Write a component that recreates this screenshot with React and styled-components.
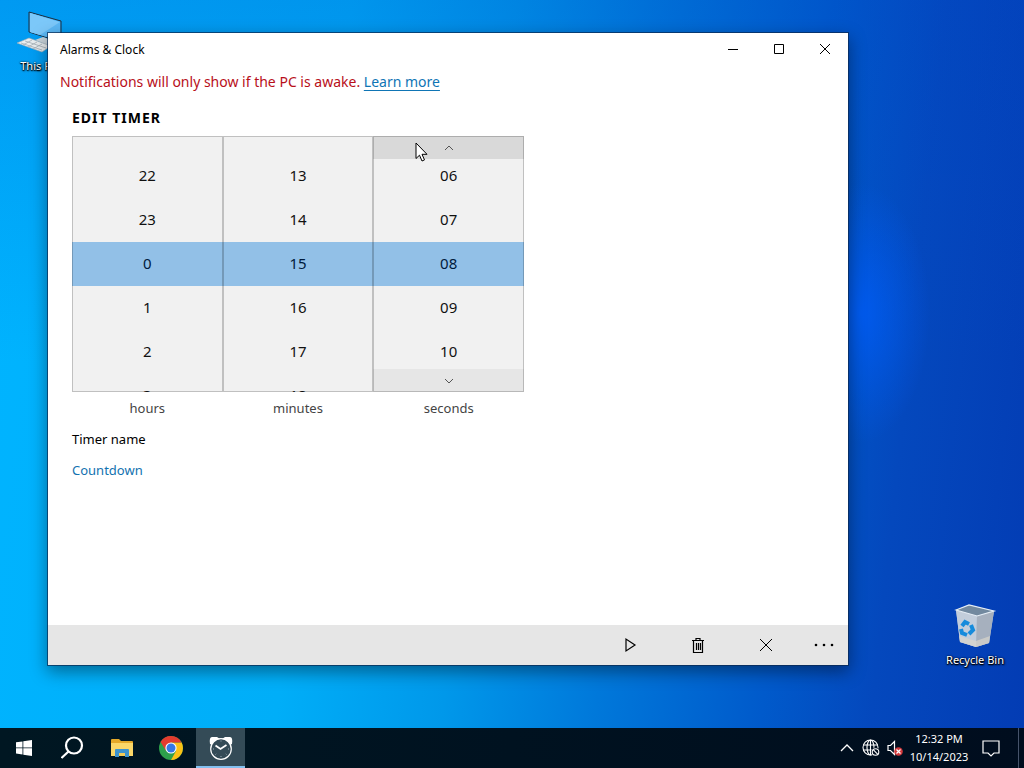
import { useState } from "react";
import styled, { createGlobalStyle } from "styled-components";

const GlobalStyles = createGlobalStyle`
  * {
    box-sizing: border-box;
  }

  body {
    margin: 0;
    font-family: "Noto Sans", "Open Sans", sans-serif;
    color: #000;
  }

  button, input {
    font-family: inherit;
    color: inherit;
  }
`;

const Screen = styled.div`
  display: flex;
  flex-direction: column;
  height: 100vh;
  overflow: hidden;
`;

const Desktop = styled.main`
  position: relative;
  flex: 1;
  min-height: 0;
  background:
    radial-gradient(ellipse 70px 130px at 84% 43%, rgba(0, 92, 245, 0.85), rgba(0, 80, 235, 0) 100%),
    linear-gradient(180deg, rgba(0, 70, 200, 0.24), rgba(0, 90, 210, 0) 50%),
    linear-gradient(96deg, #00b4ff 0%, #00aef8 32%, #0098ea 47%, #0078da 61%, #005acb 76%, #0448bd 86%, #033cb4 100%);
`;

const Shortcut = styled.button`
  position: absolute;
  display: flex;
  flex-direction: column;
  align-items: center;
  width: 76px;
  padding: 0;
  border: 0;
  background: none;
  color: #fff;
  font-size: 11px;
  line-height: 16px;
  text-shadow: 0 1px 1px #000, 1px 1px 2px #000, 0 0 2px #000;
`;

const PcShortcut = styled(Shortcut)`
  top: 10px;
  left: 1px;
`;

const BinShortcut = styled(Shortcut)`
  right: 11px;
  bottom: 60px;
`;

const Window = styled.section`
  position: absolute;
  top: 33px;
  right: 176px;
  bottom: 63px;
  left: 48px;
  display: flex;
  flex-direction: column;
  background: #fff;
  box-shadow: 0 0 0 1px rgba(10, 40, 80, 0.7), 0 6px 16px 1px rgba(0, 0, 0, 0.4);
`;

const TitleBar = styled.header`
  display: flex;
  align-items: center;
  justify-content: space-between;
  height: 32px;
  padding-left: 12px;
`;

const WindowTitle = styled.span`
  padding-top: 2px;
  font-size: 12px;
  line-height: 16px;
`;

const Row = styled.div`
  display: flex;
`;

const TaskButtons = styled(Row)`
  gap: 1px;
`;

const CaptionButton = styled.button`
  display: flex;
  align-items: center;
  justify-content: center;
  width: 46px;
  height: 32px;
  padding: 0;
  border: 0;
  background: none;
`;

const Notice = styled.p`
  margin: 0;
  padding: 6px 12px;
  font-size: 14px;
  line-height: 22px;
  color: #b80f1a;

  a {
    color: #0f75b5;
    text-underline-offset: 3px;
  }
`;

const Form = styled.form`
  display: flex;
  flex: 1;
  flex-direction: column;
  align-items: flex-start;
  min-height: 0;
  padding: 9px 24px;
`;

const Heading = styled.h1`
  margin: 0 0 8px;
  font-size: 14px;
  font-weight: 700;
  line-height: 20px;
  letter-spacing: 1px;
`;

const Picker = styled.div`
  display: flex;
  width: 452px;
  max-width: 100%;
`;

const PickerColumn = styled.div`
  flex: 1;
  min-width: 0;
`;

/* the outline is drawn over the items so it shows through the selected band */
const Wheel = styled.div`
  position: relative;
  display: flex;
  flex-direction: column;
  height: 256px;
  padding-top: 18px;
  overflow: hidden;
  background: #f1f1f1;

  &::after {
    content: "";
    position: absolute;
    inset: 0;
    border: 1px solid rgba(0, 0, 0, 0.2);
    pointer-events: none;
  }
`;

const WheelItem = styled.button`
  flex: none;
  height: 44px;
  padding: 0 0 3px;
  border: 0;
  background: ${(props) => (props.$selected ? "#92c0e7" : "none")};
  color: ${(props) => (props.$selected ? "#001a3c" : "#111")};
  font-size: 15px;
  line-height: 20px;
`;

const WheelArrow = styled.button`
  position: absolute;
  right: 0;
  left: 0;
  ${(props) => (props.$up ? "top: 0;" : "bottom: 0;")}
  display: flex;
  align-items: center;
  justify-content: center;
  height: 23px;
  padding: 0;
  border: 0;
  background: ${(props) => (props.$up ? "#d9d9d9" : "#e6e6e6")};
  color: #555;
`;

const Unit = styled.div`
  padding-top: 6px;
  font-size: 13px;
  line-height: 20px;
  text-align: center;
  color: #444;
`;

const NameLabel = styled.label`
  margin-top: 11px;
  font-size: 13px;
  line-height: 20px;
`;

const NameInput = styled.input`
  width: 240px;
  margin-top: 11px;
  padding: 0;
  border: 0;
  outline: 0;
  background: none;
  font-size: 13px;
  line-height: 20px;
  color: #1272b0;
`;

const CommandBar = styled.footer`
  display: flex;
  justify-content: flex-end;
  height: 40px;
  background: #e6e6e6;
`;

const Command = styled.button`
  display: flex;
  align-items: center;
  justify-content: center;
  width: ${(props) => (props.$more ? "48px" : "68px")};
  padding: 0;
  border: 0;
  background: none;
`;

const Taskbar = styled.nav`
  display: flex;
  align-items: stretch;
  justify-content: space-between;
  height: 40px;
  background: linear-gradient(90deg, #001722, #000d1e);
  color: #fff;
`;

const TaskButton = styled.button`
  display: flex;
  align-items: center;
  justify-content: center;
  width: ${(props) => (props.$active ? "49px" : "48px")};
  padding: 0;
  border: 0;
  background: ${(props) => (props.$active ? "#344b57" : "none")};
  box-shadow: ${(props) => (props.$active ? "inset 0 -2px #83c0f0" : "none")};
`;

const TrayButton = styled.button`
  display: flex;
  align-items: center;
  justify-content: center;
  width: 24px;
  padding: 0;
  border: 0;
  background: none;
`;

const ActionCenter = styled(TrayButton)`
  width: 40px;
`;

const Clock = styled.button`
  width: 64px;
  padding: 2px 0;
  border: 0;
  background: none;
  font-size: 11px;
  line-height: 18px;
  text-align: center;
  white-space: nowrap;
`;

const PeekButton = styled.button`
  width: 6px;
  margin-left: 7px;
  padding: 0;
  border: 0;
  border-left: 1px solid #46536a;
  background: none;
`;

const Cursor = styled.svg`
  position: absolute;
  top: 142px;
  left: 415px;
  pointer-events: none;
`;

const Line = ({ size = 16, d, width = 1, ...rest }) => (
  <svg
    width={size}
    height={size}
    viewBox={`0 0 ${size} ${size}`}
    fill="none"
    stroke="currentColor"
    strokeWidth={width}
    {...rest}
  >
    <path d={d} />
  </svg>
);

const PcIcon = () => (
  <svg width="48" height="48" viewBox="0 0 48 48">
    <path d="M14 2 46 11v21L14 22z" fill="#33a8ef" stroke="#1e2f40" />
    <path d="m15 3 30 9v19l-30-9z" fill="#5cb8f5" />
    <path d="m15 3 30 9-20 13-10-3z" fill="#7cc8f9" />
    <path d="m20 30 8-3 14 5-8 4z" fill="#c8d3da" />
    <path d="m2 33 12-5 22 8-9 6z" fill="#e9edef" stroke="#9aa8b2" strokeWidth=".6" />
    <path d="m6 33 21 7M10 31l21 7M8 35l9-5m-4 7 9-5m-4 7 9-5" stroke="#a5afb6" strokeWidth=".8" />
  </svg>
);

const BinIcon = () => (
  <svg width="48" height="48" viewBox="0 0 48 48">
    <path d="m5 6 13-5 25 6-5 32-13 4-16-5z" fill="#b9c6d6" />
    <path d="m5 6 21 6-1 31-16-5z" fill="#c2cddb" />
    <path d="m26 12 17-5-5 32-13 4z" fill="#a6b0be" />
    <path d="m5 6 13-5 25 6-17 5z" fill="#72899f" stroke="#e6eef6" strokeWidth="1.2" />
    <path d="m8 32 17 5 14-5-1 7-13 4-16-5z" fill="#d8d5cc" opacity=".7" />
    <g fill="none" stroke="#168bdc" strokeWidth="4">
      <path d="m11 22 3-4 4 2" />
      <path d="m20 21 2 5-4 4" />
      <path d="m10 25 1 4 5 2" />
    </g>
  </svg>
);

const FolderIcon = () => (
  <svg width="22" height="20" viewBox="0 0 22 20">
    <path d="M0 2q0-1 1-1h7l2 2h11q1 0 1 1v14H0z" fill="#e5a929" />
    <path d="M0 5h22v13H0z" fill="#fbd768" />
    <path d="M4 19v-7q0-1 1-1h12q1 0 1 1v7h-4v-4H8v4z" fill="#3d93cd" />
    <path d="M8 15h6v3H8z" fill="#f3cb57" />
  </svg>
);

const ChromeIcon = () => (
  <svg width="24" height="24" viewBox="0 0 24 24">
    <circle cx="12" cy="12" r="12" fill="#2da04b" />
    <path d="M12 6.500h10.600a12 12 0 0 1-10.600 17.500l5-9z" fill="#fbc116" />
    <path d="M1.600 6A12 12 0 0 1 22.600 6.500H12L7 14.800z" fill="#e33b2e" />
    <circle cx="12" cy="12" r="5.600" fill="#fff" />
    <circle cx="12" cy="12" r="4.500" fill="#3578e5" />
  </svg>
);

const AlarmIcon = () => (
  <svg width="24" height="24" viewBox="0 0 24 24">
    <path d="M1 8Q0 1 3 1h5l3 2-8 6zM23 8q1-7-2-7h-5l-3 2 8 6z" fill="#fff" />
    <circle cx="12" cy="13" r="10.300" fill="#344b57" stroke="#fff" strokeWidth="1.200" />
    <path d="m6.500 9.500 5 3.500 6-4" fill="none" stroke="#fff" strokeWidth="1.800" />
    <path
      d="M12 4.500v1M12 20v1M4 13h1M19 13h1M6.500 18.500l.7-.7M17.500 18.500l-.7-.7"
      stroke="#9fb0ba"
    />
  </svg>
);

const GlobeIcon = () => (
  <svg width="18" height="18" viewBox="0 0 18 18" fill="none" stroke="#fff" strokeWidth="1.100">
    <circle cx="8.500" cy="8.500" r="7.500" />
    <ellipse cx="8.500" cy="8.500" rx="3.500" ry="7.500" />
    <path d="M1 6h15M1 11h15M8.500 1v15" />
    <circle cx="13.500" cy="13" r="4.600" fill="#000d1e" stroke="none" />
    <circle cx="13.500" cy="13" r="3.300" />
    <path d="m11.200 10.700 4.600 4.600" />
  </svg>
);

const SpeakerIcon = () => (
  <svg width="18" height="18" viewBox="0 0 18 18">
    <path d="M2 6.500h2.500l4-4v13l-4-4H2z" fill="none" stroke="#fff" strokeWidth="1.200" />
    <circle cx="12.500" cy="12.500" r="4.300" fill="#d2393c" />
    <path d="m10.500 10.500 4 4m0-4-4 4" stroke="#fff" strokeWidth="1.200" />
  </svg>
);

const WHEELS = [
  { unit: "hours", values: ["22", "23", "0", "1", "2", "3"], selected: "0" },
  { unit: "minutes", values: ["13", "14", "15", "16", "17", "18"], selected: "15" },
  {
    unit: "seconds",
    values: ["06", "07", "08", "09", "10"],
    selected: "08",
    hovered: true,
  },
];

const TimeWheel = ({ unit, values, selected, hovered }) => (
  <PickerColumn>
    <Wheel>
      {values.map((value) => (
        <WheelItem type="button" key={value} $selected={value === selected}>
          {value}
        </WheelItem>
      ))}
      {hovered && (
        <>
          <WheelArrow type="button" $up aria-label={`Previous ${unit}`}>
            <Line size={10} d="m1 7 4-4 4 4" />
          </WheelArrow>
          <WheelArrow type="button" aria-label={`Next ${unit}`}>
            <Line size={10} d="m1 3 4 4 4-4" />
          </WheelArrow>
        </>
      )}
    </Wheel>
    <Unit>{unit}</Unit>
  </PickerColumn>
);

function App() {
  const [timerName, setTimerName] = useState("Countdown");

  return (
    <Screen>
      <GlobalStyles />
      <Desktop>
        <PcShortcut>
          <PcIcon />
          This PC
        </PcShortcut>
        <BinShortcut>
          <BinIcon />
          Recycle Bin
        </BinShortcut>
        <Window>
          <TitleBar>
            <WindowTitle>Alarms &amp; Clock</WindowTitle>
            <Row>
              <CaptionButton aria-label="Minimize">
                <Line size={10} d="M0 5.500h10" />
              </CaptionButton>
              <CaptionButton aria-label="Maximize">
                <Line size={10} d="M.5.5h9v9h-9z" />
              </CaptionButton>
              <CaptionButton aria-label="Close">
                <Line size={10} d="m0 0 10 10M10 0 0 10" />
              </CaptionButton>
            </Row>
          </TitleBar>
          <Notice>
            Notifications will only show if the PC is awake. <a href="#learn">Learn more</a>
          </Notice>
          <Form>
            <Heading>EDIT TIMER</Heading>
            <Picker>
              {WHEELS.map((wheel) => (
                <TimeWheel key={wheel.unit} {...wheel} />
              ))}
            </Picker>
            <NameLabel htmlFor="timer-name">Timer name</NameLabel>
            <NameInput
              id="timer-name"
              type="text"
              value={timerName}
              onChange={(e) => setTimerName(e.target.value)}
            />
          </Form>
          <CommandBar>
            <Command aria-label="Start">
              <Line d="M4 2v12l9-6z" width={1.2} />
            </Command>
            <Command aria-label="Delete">
              <Line
                d="M2 3.500h12M6 3V1.500h4V3M3.500 4v11.500h9V4M6.500 6v7M8.500 6v7M10.500 6v7"
                width={1.2}
              />
            </Command>
            <Command aria-label="Cancel">
              <Line d="m2 2 12 12M14 2 2 14" />
            </Command>
            <Command $more aria-label="More">
              <svg width="20" height="4" viewBox="0 0 20 4">
                <circle cx="2" cy="2" r="1.300" />
                <circle cx="10" cy="2" r="1.300" />
                <circle cx="18" cy="2" r="1.300" />
              </svg>
            </Command>
          </CommandBar>
        </Window>
        <Cursor width="13" height="20" viewBox="0 0 13 20">
          <path d="M1 1v15.500l3.500-3.300L7 19l2.500-1.100L7 12.300h5z" fill="#fff" stroke="#000" />
        </Cursor>
      </Desktop>
      <Taskbar>
        <TaskButtons>
          <TaskButton aria-label="Start menu">
            <svg width="16" height="16" viewBox="0 0 16 16" fill="#fff">
              <path d="m0 2.300 6.500-.9v6.100H0zM7.300 1.300 16 0v7.500H7.300zM0 8.300h6.500v6.200L0 13.600zM7.300 8.300H16V16l-8.700-1.300z" />
            </svg>
          </TaskButton>
          <TaskButton aria-label="Search">
            <svg width="24" height="24" viewBox="0 0 24 24" fill="none" stroke="#fff" strokeWidth="2.200">
              <circle cx="13" cy="9.500" r="8" />
              <path d="m7.500 15.500-7 6.500" />
            </svg>
          </TaskButton>
          <TaskButton aria-label="File Explorer">
            <FolderIcon />
          </TaskButton>
          <TaskButton aria-label="Google Chrome">
            <ChromeIcon />
          </TaskButton>
          <TaskButton $active aria-label="Alarms and Clock">
            <AlarmIcon />
          </TaskButton>
        </TaskButtons>
        <Row>
          <TrayButton aria-label="Show hidden icons">
            <Line size={14} d="m1 10 6-6 6 6" width={1.3} />
          </TrayButton>
          <TrayButton aria-label="Network">
            <GlobeIcon />
          </TrayButton>
          <TrayButton aria-label="Volume">
            <SpeakerIcon />
          </TrayButton>
          <Clock>
            12:32 PM
            <br />
            10/14/2023
          </Clock>
          <ActionCenter aria-label="Notifications">
            <Line size={18} d="M1 2h16v12h-5l-3 3-3-3H1z" width={1.2} />
          </ActionCenter>
          <PeekButton aria-label="Show desktop" />
        </Row>
      </Taskbar>
    </Screen>
  );
}

export default App;
